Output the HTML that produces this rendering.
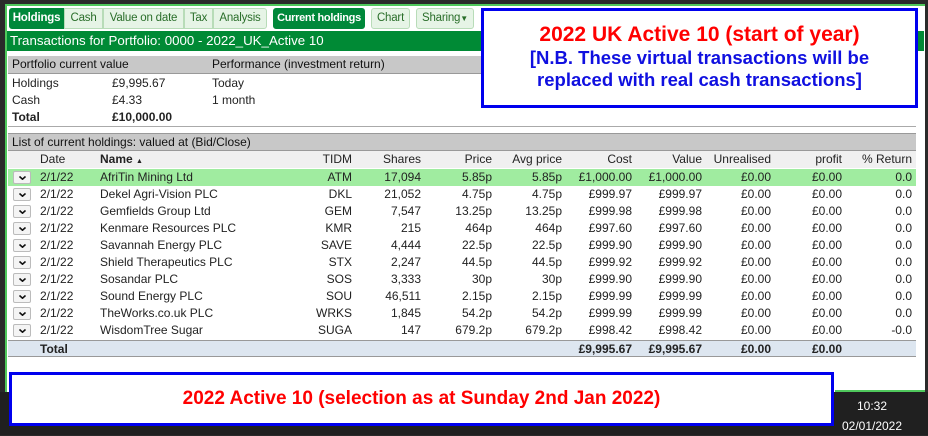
<!DOCTYPE html>
<html><head><style>
*{margin:0;padding:0;box-sizing:border-box}
body{width:928px;height:435px;background:#2a2a2a;position:relative;overflow:hidden;font-family:"Liberation Sans",Arial,sans-serif;font-size:12px;color:#222}
.a{position:absolute}
#win{left:5px;top:4px;width:920px;height:388px;background:#fff;border:2px solid #4fc85c;border-right:none;border-bottom:none}
.tab{position:absolute;top:8px;height:21px;line-height:19px;text-align:center;font-size:11.5px;white-space:nowrap;overflow:hidden;letter-spacing:-0.2px;border:1px solid #b8dcb8;background:#e6f4e6;color:#2a6e2a}
.dk{background:#00883a;color:#fff;font-weight:bold;border-color:#00883a}
.row{position:absolute;left:8px;width:908px;height:17px;line-height:17px}
.c{position:absolute;white-space:nowrap}
.r{text-align:right}
.btn{position:absolute;left:5px;top:2px;width:18px;height:13px;border:1px solid #bbb;border-radius:2px;background:#f4f4f4}
.btn svg{position:absolute;left:5px;top:4px}
</style></head><body>
<div id="win" class="a"></div>
<div class="tab dk" style="left:9px;width:55px;border-radius:3px 0 0 3px">Holdings</div>
<div class="tab" style="left:64px;width:39px">Cash</div>
<div class="tab" style="left:103px;width:81px">Value on date</div>
<div class="tab" style="left:184px;width:29px">Tax</div>
<div class="tab" style="left:213px;width:54px;border-radius:0 3px 3px 0">Analysis</div>
<div class="tab dk" style="left:273px;width:92px;border-radius:3px;font-size:11px;letter-spacing:-0.3px">Current holdings</div>
<div class="tab" style="left:371px;width:39px;border-radius:3px">Chart</div>
<div class="tab" style="left:416px;width:58px;border-radius:3px">Sharing<span style="font-size:8px">&#9660;</span></div>
<div class="a" style="left:7px;top:31px;width:917px;height:20px;background:#008a35;color:#fff;font-size:13.3px;line-height:20px;padding-left:3px">Transactions for Portfolio: 0000 - 2022_UK_Active 10</div>
<div class="a" style="left:8px;top:56px;width:908px;height:18px;background:#c8c8c8;border-bottom:1px solid #999;font-size:12px;line-height:17px;color:#111"><span class="c" style="left:4px">Portfolio current value</span><span class="c" style="left:204px">Performance (investment return)</span></div>
<div class="a" style="left:12px;top:75px;line-height:17px">Holdings<br>Cash<br><b>Total</b></div>
<div class="a" style="left:112px;top:75px;line-height:17px">£9,995.67<br>£4.33<br><b>£10,000.00</b></div>
<div class="a" style="left:212px;top:75px;line-height:17px">Today<br>1 month</div>
<div class="a" style="left:8px;top:126px;width:908px;border-top:1px solid #aaa"></div>
<div class="a" style="left:8px;top:133px;width:908px;height:18px;background:#c8c8c8;border-top:1px solid #999;border-bottom:1px solid #999;line-height:16px;padding-left:4px;color:#111">List of current holdings: valued at (Bid/Close)</div>
<div class="row" style="top:151px;background:#f0f0f0">
<span class="c" style="left:32px">Date</span><span class="c" style="left:92px"><b>Name</b> <span style="font-size:7px">&#9650;</span></span>
<span class="c r" style="right:564px">TIDM</span><span class="c r" style="right:495px">Shares</span><span class="c r" style="right:424px">Price</span><span class="c r" style="right:354px">Avg price</span><span class="c r" style="right:284px">Cost</span><span class="c r" style="right:214px">Value</span><span class="c r" style="right:145px">Unrealised</span><span class="c r" style="right:74px">profit</span><span class="c r" style="right:4px">% Return</span></div>
<div id="rows"></div>
<div class="row" style="top:340px;background:#dde6f0;border-top:1px solid #999;border-bottom:1px solid #999;font-weight:bold;line-height:16px">
<span class="c" style="left:32px">Total</span><span class="c r" style="right:284px">£9,995.67</span><span class="c r" style="right:214px">£9,995.67</span><span class="c r" style="right:145px">£0.00</span><span class="c r" style="right:74px">£0.00</span></div>
<script>
var d=[["AfriTin Mining Ltd","ATM","17,094","5.85p","5.85p","£1,000.00","£1,000.00","0.0"],["Dekel Agri-Vision PLC","DKL","21,052","4.75p","4.75p","£999.97","£999.97","0.0"],["Gemfields Group Ltd","GEM","7,547","13.25p","13.25p","£999.98","£999.98","0.0"],["Kenmare Resources PLC","KMR","215","464p","464p","£997.60","£997.60","0.0"],["Savannah Energy PLC","SAVE","4,444","22.5p","22.5p","£999.90","£999.90","0.0"],["Shield Therapeutics PLC","STX","2,247","44.5p","44.5p","£999.92","£999.92","0.0"],["Sosandar PLC","SOS","3,333","30p","30p","£999.90","£999.90","0.0"],["Sound Energy PLC","SOU","46,511","2.15p","2.15p","£999.99","£999.99","0.0"],["TheWorks.co.uk PLC","WRKS","1,845","54.2p","54.2p","£999.99","£999.99","0.0"],["WisdomTree Sugar","SUGA","147","679.2p","679.2p","£998.42","£998.42","-0.0"]];
var ch='<svg width="7" height="4" viewBox="0 0 7 4"><path d="M0.5 0.5L3.5 3.2L6.5 0.5" stroke="#111" stroke-width="1.6" fill="none"/></svg>';
var h="";d.forEach(function(x,i){h+='<div class="row" style="top:'+(169+i*17)+'px;'+(i==0?'background:#a0eca0':'')+'"><div class="btn">'+ch+'</div><span class="c" style="left:32px">2/1/22</span><span class="c" style="left:92px">'+x[0]+'</span><span class="c r" style="right:564px">'+x[1]+'</span><span class="c r" style="right:495px">'+x[2]+'</span><span class="c r" style="right:424px">'+x[3]+'</span><span class="c r" style="right:354px">'+x[4]+'</span><span class="c r" style="right:284px">'+x[5]+'</span><span class="c r" style="right:214px">'+x[6]+'</span><span class="c r" style="right:145px">£0.00</span><span class="c r" style="right:74px">£0.00</span><span class="c r" style="right:4px">'+x[7]+'</span></div>'});
document.getElementById("rows").innerHTML=h;
</script>
<div class="a" style="left:481px;top:8px;width:437px;height:100px;border:3px solid #0000ee;background:#fff;text-align:center;font-weight:bold">
<div style="color:#f00;font-size:21px;margin-top:12px;line-height:24px">2022 UK Active 10 (start of year)</div>
<div style="color:#1010e0;font-size:18.5px;line-height:22px">[N.B. These virtual transactions will be<br>replaced with real cash transactions]</div></div>
<div class="a" style="left:0;top:392px;width:928px;height:43px;background:#202020"></div>
<div class="a" style="left:835px;top:390px;width:90px;height:2px;background:#4fc85c"></div>
<div class="a" style="left:9px;top:372px;width:825px;height:54px;border:3px solid #0000ee;background:#fff;text-align:center;color:#f00;font-weight:bold;font-size:19px;line-height:48px">2022 Active 10 (selection as at Sunday 2nd Jan 2022)</div>
<div class="a" style="left:836px;top:396px;width:72px;text-align:center;color:#fff;font-size:12px;line-height:20px">10:32<br>02/01/2022</div>
</body></html>
